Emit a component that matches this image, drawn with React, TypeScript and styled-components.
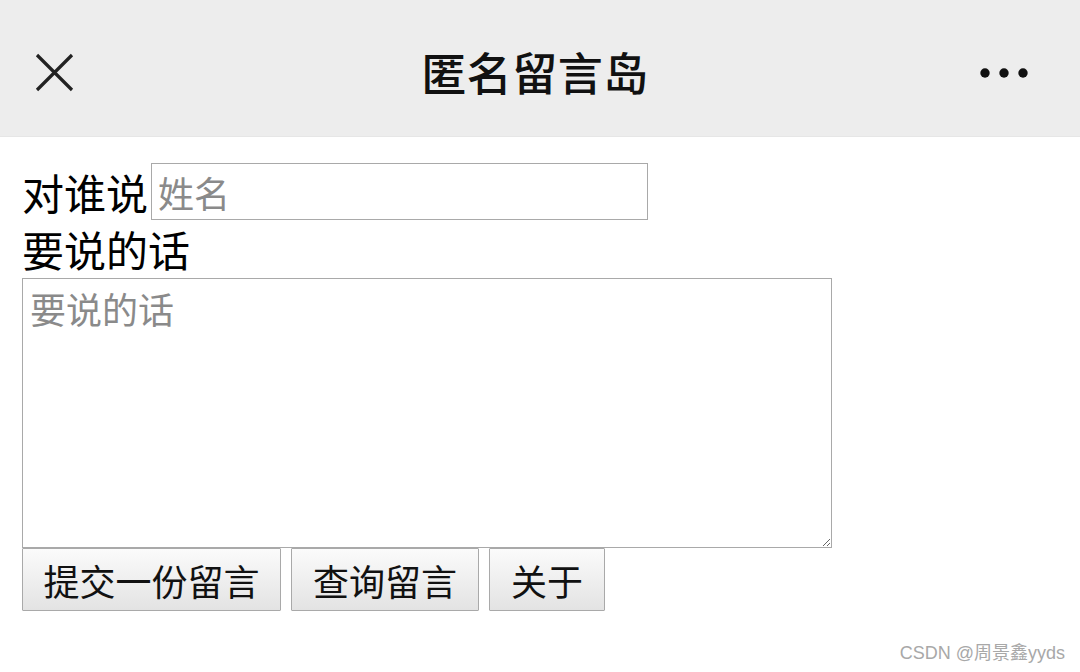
import styled, { createGlobalStyle } from 'styled-components';

const GlobalStyle = createGlobalStyle`
  html, body {
    margin: 0;
    padding: 0;
    background: #ffffff;
  }
  body {
    font-family: 'Noto Sans CJK SC', 'Noto Sans', sans-serif;
    color: #000;
  }
`;

const Page = styled.div`
  width: 1080px;
  height: 672px;
  display: flex;
  flex-direction: column;
  overflow: hidden;
`;

const NavBar = styled.header`
  height: 137px;
  flex-shrink: 0;
  display: grid;
  grid-template-columns: 110px 1fr 110px;
  align-items: center;
  background: #ededed;
  border-bottom: 1px solid #e6e6e6;
  box-sizing: border-box;
`;

const NavButton = styled.div<{ $align: 'start' | 'end' }>`
  display: flex;
  justify-content: ${(p) => (p.$align === 'start' ? 'flex-start' : 'flex-end')};
  padding-left: ${(p) => (p.$align === 'start' ? '34px' : '0')};
  padding-right: ${(p) => (p.$align === 'end' ? '50px' : '0')};
  margin-top: ${(p) => (p.$align === 'start' ? '7px' : '9px')};
`;

const Title = styled.h1`
  margin: 6px 10px 0 0;
  text-align: center;
  font-size: 45px;
  font-weight: 500;
  color: #111;
  letter-spacing: 0.5px;
`;

const Form = styled.main`
  padding: 26px 0 0 22px;
  display: flex;
  flex-direction: column;
`;

const NameRow = styled.div`
  display: flex;
  align-items: center;
  height: 57px;
`;

const Label = styled.label`
  font-size: 42px;
  line-height: 58px;
  color: #000;
`;

const NameInput = styled.input`
  width: 497px;
  height: 57px;
  margin-left: 3px;
  box-sizing: border-box;
  border: 1px solid #a9a9a9;
  padding: 0 6px;
  font-family: inherit;
  font-size: 36px;
  outline: none;
  &::placeholder {
    color: #8a8a8a;
  }
`;

const MessageInput = styled.textarea`
  width: 810px;
  height: 270px;
  box-sizing: border-box;
  border: 1px solid #a9a9a9;
  padding: 7px 7px;
  font-family: inherit;
  font-size: 36px;
  line-height: 44px;
  outline: none;
  margin: 0;
  display: block;
  &::placeholder {
    color: #8a8a8a;
  }
`;

const Buttons = styled.div`
  display: flex;
  gap: 10px;
`;

const Button = styled.button<{ $width: number }>`
  width: ${(p) => p.$width}px;
  height: 63px;
  box-sizing: border-box;
  border: 1px solid #a9a9a9;
  border-radius: 1px;
  background: linear-gradient(#fbfbfb, #e3e3e3);
  font-family: inherit;
  font-size: 36px;
  color: #111;
  padding: 0;
  line-height: 1;
`;

const Footer = styled.footer`
  margin-top: auto;
  padding: 0 15px 8px 0;
  text-align: right;
  font-family: 'Liberation Sans', 'Noto Sans CJK SC', sans-serif;
  font-size: 18px;
  color: #a8a8a8;
`;

const CloseIcon = () => (
  <svg width="40" height="40" viewBox="0 0 40 40">
    <path d="M3 3 L38 38 M38 3 L3 38" stroke="#222" strokeWidth="3.2" strokeLinecap="butt" />
  </svg>
);

const MoreIcon = () => (
  <svg width="50" height="12" viewBox="0 0 50 12">
    <circle cx="5" cy="6" r="4.7" fill="#111" />
    <circle cx="24" cy="6" r="4.7" fill="#111" />
    <circle cx="43" cy="6" r="4.7" fill="#111" />
  </svg>
);

export default function App() {
  return (
    <>
      <GlobalStyle />
      <Page>
        <NavBar>
          <NavButton $align="start">
            <CloseIcon />
          </NavButton>
          <Title>匿名留言岛</Title>
          <NavButton $align="end">
            <MoreIcon />
          </NavButton>
        </NavBar>
        <Form>
          <NameRow>
            <Label htmlFor="name">对谁说</Label>
            <NameInput id="name" placeholder="姓名" />
          </NameRow>
          <Label htmlFor="msg">要说的话</Label>
          <MessageInput id="msg" placeholder="要说的话" />
          <Buttons>
            <Button $width={259}>提交一份留言</Button>
            <Button $width={188}>查询留言</Button>
            <Button $width={116}>关于</Button>
          </Buttons>
        </Form>
        <Footer>CSDN @周景鑫yyds</Footer>
      </Page>
    </>
  );
}
